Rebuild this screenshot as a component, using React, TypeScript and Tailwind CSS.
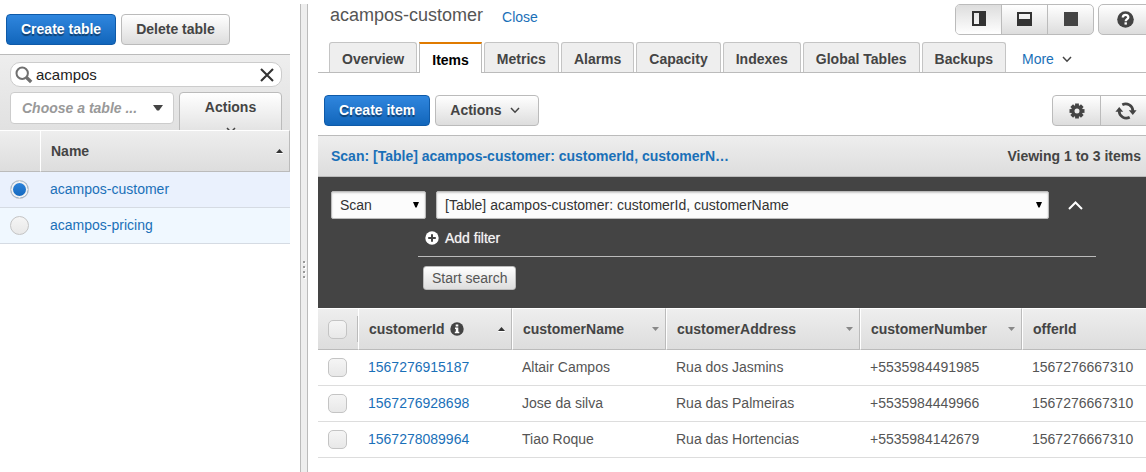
import { useState } from "react";

const panelGradient = "bg-linear-to-b from-[#eeeeee] to-[#dddddd]";
const grayButton =
  "border border-[#bbbbbb] bg-linear-to-b from-white to-[#dddddd] font-bold text-[#444444] hover:to-[#cccccc]";
const blueButton =
  "h-[31px] rounded border border-[#0f5aa8] bg-linear-to-b from-[#2f86de] to-[#1166bb] px-3.5 pb-0.5 font-bold text-white text-shadow-[0_2px_1px_rgb(0_0_0/0.45)]";

function Chevron({ up = false }: { up?: boolean }) {
  return (
    <svg width="10" height="7" viewBox="0 0 10 7" fill="none" stroke="currentColor" strokeWidth="1.5" aria-hidden="true">
      <path d={up ? "M1 6 L5 1.5 L9 6" : "M1 1 L5 5.2 L9 1"} />
    </svg>
  );
}

function SortArrow({ direction }: { direction: "up" | "down" }) {
  return (
    <svg width="7" height="5" viewBox="0 0 7 5" aria-hidden="true" className={direction === "up" ? "text-[#333333]" : "text-[#888888]"}>
      <path d={direction === "up" ? "M0 4 L3.5 0 L7 4Z" : "M0 0 H7 L3.5 4Z"} fill="currentColor" />
      {direction === "up" && <path d="M0 4.5 H7" stroke="#fff" />}
    </svg>
  );
}

function SearchIcon() {
  return (
    <svg width="18" height="18" viewBox="0 0 18 18" fill="none" stroke="#707070" aria-hidden="true">
      <circle cx="7.2" cy="7.2" r="5.7" strokeWidth="2" />
      <path d="M11.5 11.5 L16.2 16" strokeWidth="3.4" />
    </svg>
  );
}

function GearIcon() {
  return (
    <svg width="16" height="16" viewBox="0 0 16 16" aria-hidden="true">
      <g stroke="#444" strokeWidth="3.8">
        <path d="M8 .5 V4" />
        <path d="M8 12 V15.5" />
        <path d="M.5 8 H4" />
        <path d="M12 8 H15.5" />
        <path d="M2.7 2.7 L5 5" />
        <path d="M11 11 L13.3 13.3" />
        <path d="M2.7 13.3 L5 11" />
        <path d="M11 5 L13.3 2.7" />
      </g>
      <circle cx="8" cy="8" r="4.2" fill="none" stroke="#444" strokeWidth="3.4" />
    </svg>
  );
}

function RefreshIcon() {
  return (
    <svg width="22" height="18" viewBox="0 0 22 18" aria-hidden="true">
      <g fill="none" stroke="#444" strokeWidth="2.7">
        <path d="M7.3 2.8 A7.2 7.2 0 0 1 17.9 9" />
        <path d="M14.7 15.2 A7.2 7.2 0 0 1 4.1 9" />
      </g>
      <path d="M13.8 8.3 H21.6 L17.8 13Z M.4 9.7 H8.2 L4.2 5Z" fill="#444" />
    </svg>
  );
}

function HelpIcon() {
  return (
    <svg width="17" height="17" viewBox="0 0 17 17" aria-hidden="true">
      <circle cx="8.5" cy="8.5" r="8.3" fill="#444" />
      <path d="M5.8 6.6 C5.8 3 11.3 3.2 11.3 6.2 C11.3 8.1 8.7 8.1 8.7 10.2" fill="none" stroke="#fff" strokeWidth="2.3" />
      <rect x="7.5" y="11.3" width="2.4" height="2.3" fill="#fff" />
    </svg>
  );
}

function InfoIcon() {
  return (
    <svg width="14" height="14" viewBox="0 0 14 14" aria-hidden="true">
      <circle cx="7" cy="7" r="6.7" fill="#444" />
      <path d="M5.7 2.4 H8.3 V4.6 H5.7Z M5 5.6 H8.3 V9.8 H9.3 V11.3 H4.8 V9.8 H5.8 V7.1 H5Z" fill="#fff" />
    </svg>
  );
}

function PlusIcon() {
  return (
    <svg width="14" height="14" viewBox="0 0 14 14" aria-hidden="true">
      <circle cx="7" cy="7" r="6.7" fill="#fff" />
      <path d="M7 3.2 V10.8 M3.2 7 H10.8" stroke="#444" strokeWidth="2" />
    </svg>
  );
}

function SelectArrow() {
  return (
    <svg width="6" height="6" viewBox="0 0 6 6" className="pointer-events-none absolute top-[11px] right-[7px]" aria-hidden="true">
      <path d="M0 0 H6 L3.6 5.6 H2.4Z" fill="#000" />
    </svg>
  );
}

const tableNames = ["acampos-customer", "acampos-pricing"];

function Sidebar() {
  const [filter, setFilter] = useState("acampos");
  const [selected, setSelected] = useState(tableNames[0]);

  return (
    <aside className="w-[290px] shrink-0">
      <div className="flex h-[54px] gap-[5px] pt-3.5 pl-1.5">
        <button className={blueButton}>Create table</button>
        <button className={`${grayButton} h-[31px] rounded px-3.5 pb-0.5`}>Delete table</button>
      </div>

      <div className="h-[76px] overflow-hidden border-t border-[#bbbbbb] bg-linear-to-b from-[#eeeeee] to-[#e1e1e1] pt-[7px] pr-2 pl-2.5">
        <div className="flex h-[25px] items-center rounded-[10px] border border-[#cccccc] bg-white pr-[7px] pl-1">
          <SearchIcon />
          <input
            aria-label="Filter tables"
            value={filter}
            onChange={(e) => setFilter(e.target.value)}
            className="ml-[3px] min-w-0 flex-1 text-[15px] text-[#222222] outline-none"
          />
          <button aria-label="Clear filter" onClick={() => setFilter("")}>
            <svg width="14" height="14" viewBox="0 0 14 14" stroke="#333" strokeWidth="2.1" aria-hidden="true">
              <path d="M1 1 L13 13 M13 1 L1 13" />
            </svg>
          </button>
        </div>
        <div className="mt-[5px] flex items-start gap-[5px]">
          <button className="flex h-8 flex-1 items-center justify-between rounded border border-[#cccccc] bg-white pr-2.5 pl-[11px] font-bold text-[#999999] italic">
            Choose a table ...
            <svg width="10" height="6" viewBox="0 0 10 6" aria-hidden="true">
              <path d="M0 0 H10 L6 5.6 H4Z" fill="#444" />
            </svg>
          </button>
          <button className={`${grayButton} flex h-12 w-[103px] flex-col items-center gap-3 rounded pt-1.5`}>
            <span className="leading-4">Actions</span>
            <Chevron />
          </button>
        </div>
      </div>

      <table className="w-full table-fixed border-separate border-spacing-0">
        <colgroup>
          <col className="w-10" />
          <col />
        </colgroup>
        <thead>
          <tr className="h-[42px]">
            <th className={`${panelGradient} border-t border-b border-t-white border-b-[#bbbbbb]`} aria-label="Selection" />
            <th className={`${panelGradient} border-t border-r border-b border-l border-t-white border-r-[#bbbbbb] border-b-[#bbbbbb] border-l-white pr-1.5 pl-2.5`}>
              <div className="flex items-center justify-between">
                Name
                <SortArrow direction="up" />
              </div>
            </th>
          </tr>
        </thead>
        <tbody>
          {tableNames.map((name) => (
            <tr key={name} className={`h-9 ${selected === name ? "bg-[#eaf1fd]" : "bg-[#f0f8ff]"}`}>
              <td className="border-b border-[#d5dbe3] pl-2.5">
                <input
                  type="radio"
                  name="table"
                  aria-label={name}
                  checked={selected === name}
                  onChange={() => setSelected(name)}
                  className="block size-[19px] appearance-none rounded-full border border-[#c4c4c4] bg-linear-to-b from-[#f5f5f5] to-[#e8e8e8] checked:from-[#2f86de] checked:to-[#1166bb] checked:shadow-[inset_0_0_0_2px_#f2f2f2]"
                />
              </td>
              <td className="border-b border-[#d5dbe3] pb-0.5 pl-2.5">
                <a href="#table" className="text-[#1a70b8]">{name}</a>
              </td>
            </tr>
          ))}
        </tbody>
      </table>
    </aside>
  );
}

const tabs = ["Overview", "Items", "Metrics", "Alarms", "Capacity", "Indexes", "Global Tables", "Backups"];

function Tabs() {
  return (
    <nav className="flex h-[31px] shrink-0 items-end gap-0.5 border-b border-[#bbbbbb] pl-[11px] whitespace-nowrap">
      {tabs.map((tab) =>
        tab === "Items" ? (
          <button
            key={tab}
            className="-mb-px h-[31px] border-x border-t-2 border-x-[#bbbbbb] border-t-[#e07b00] bg-white px-3 pt-0.5 font-bold text-black"
          >
            {tab}
          </button>
        ) : (
          <button
            key={tab}
            className="h-[30px] rounded-t-[3px] border border-b-0 border-[#c4c4c4] bg-[#eeeeee] px-3 pt-0.5 font-bold text-[#444444]"
          >
            {tab}
          </button>
        ),
      )}
      <button className="ml-3.5 flex h-[30px] items-center gap-2 pt-1 text-[#1a70b8]">
        More
        <span className="text-[#444444]">
          <Chevron />
        </span>
      </button>
    </nav>
  );
}

function Header() {
  return (
    <header className="flex h-[42px] shrink-0 items-start justify-between pl-3">
      <div className="flex items-end gap-[19px] pt-0.5">
        <h1 className="text-lg leading-[26px] text-[#555555]">acampos-customer</h1>
        <a href="#close" className="leading-[22px] text-[#1a70b8]">Close</a>
      </div>
      <div className="-mr-1.5 flex gap-1 pt-1">
        <div className={`${grayButton} flex h-[31px] divide-x divide-[#bbbbbb] overflow-hidden rounded-[5px]`}>
          <button aria-label="Split vertically" className="flex w-[46px] items-center justify-center bg-linear-to-b from-[#dddddd] to-white pb-0.5">
            <svg width="14" height="15" viewBox="0 0 14 15" aria-hidden="true">
              <path d="M0 0 H14 V15 H0Z M2 2 V13 H7 V2Z" fill="#333" fillRule="evenodd" />
            </svg>
          </button>
          <button aria-label="Split horizontally" className="flex w-[46px] items-center justify-center pb-0.5">
            <svg width="15" height="15" viewBox="0 0 15 15" aria-hidden="true">
              <path d="M0 1 H15 V15 H0Z M2 3 V8 H13 V3Z" fill="#333" fillRule="evenodd" />
            </svg>
          </button>
          <button aria-label="Full view" className="flex w-[45px] items-center justify-center pb-0.5">
            <span className="size-3.5 bg-[#444444]" />
          </button>
        </div>
        <button aria-label="Help" className={`${grayButton} flex h-[31px] w-[54px] items-center justify-center rounded-[5px]`}>
          <HelpIcon />
        </button>
      </div>
    </header>
  );
}

function Toolbar() {
  return (
    <div className="flex h-[62px] shrink-0 items-start justify-between pt-[22px] pl-1.5">
      <div className="flex gap-[5px]">
        <button className={blueButton}>Create item</button>
        <button className={`${grayButton} flex h-[31px] w-[104px] items-center gap-2 rounded pb-0.5 pl-3.5`}>
          Actions
          <span className="pt-0.5">
            <Chevron />
          </span>
        </button>
      </div>
      <div className={`${grayButton} -mr-1.5 flex h-[31px] divide-x divide-[#bbbbbb] rounded`}>
        <button aria-label="Settings" className="flex w-12 items-center justify-center">
          <GearIcon />
        </button>
        <button aria-label="Refresh" className="flex w-[50px] items-center justify-center">
          <RefreshIcon />
        </button>
      </div>
    </div>
  );
}

const selectStyle =
  "h-7 w-full appearance-none rounded-[2px] border border-[#bbbbbb] bg-[#fcfcfc] px-2 text-[#333333] shadow-[inset_0_1px_2px_#cccccc]";

function Query() {
  return (
    <section className="shrink-0">
      <div className={`${panelGradient} flex h-[42px] items-center justify-between border-y border-[#bbbbbb] pr-[5px] pl-[13px] font-bold`}>
        <a href="#query" className="text-[#1a70b8]">
          Scan: [Table] acampos-customer: customerId, customerN…
        </a>
        <span>Viewing 1 to 3 items</span>
      </div>
      <div className="h-[131px] bg-[#444444] pt-3.5 pl-[13px]">
        <div className="flex items-center">
          <div className="relative w-[95px]">
            <select aria-label="Operation" className={selectStyle}>
              <option>Scan</option>
              <option>Query</option>
            </select>
            <SelectArrow />
          </div>
          <div className="relative ml-2.5 flex-1">
            <select aria-label="Table or index" className={selectStyle}>
              <option>[Table] acampos-customer: customerId, customerName</option>
            </select>
            <SelectArrow />
          </div>
          <button aria-label="Collapse search" className="flex w-[97px] pl-[19px] text-white">
            <svg width="15" height="9" viewBox="0 0 15 9" fill="none" stroke="currentColor" strokeWidth="2" aria-hidden="true">
              <path d="M1 8 L7.5 1.5 L14 8" />
            </svg>
          </button>
        </div>
        <div className="mr-[50px] ml-[87px] flex h-[38px] items-center border-b border-[#bbbbbb] pl-[7px]">
          <button className="flex items-center gap-1.5 text-[#f5f5f5] text-shadow-[0_0_1px_rgb(255_255_255/0.6)]">
            <PlusIcon />
            Add filter
          </button>
        </div>
        <button className="mt-[9px] ml-[92px] block h-6 rounded-[3px] border border-[#bbbbbb] bg-linear-to-b from-white to-[#dddddd] px-2 leading-5 text-[#555555]">
          Start search
        </button>
      </div>
    </section>
  );
}

const columns: { name: string; sort?: "up" | "down"; info?: boolean }[] = [
  { name: "customerId", sort: "up", info: true },
  { name: "customerName", sort: "down" },
  { name: "customerAddress", sort: "down" },
  { name: "customerNumber", sort: "down" },
  { name: "offerId" },
];

const rows = [
  ["1567276915187", "Altair Campos", "Rua dos Jasmins", "+5535984491985", "1567276667310"],
  ["1567276928698", "Jose da silva", "Rua das Palmeiras", "+5535984449966", "1567276667310"],
  ["1567278089964", "Tiao Roque", "Rua das Hortencias", "+5535984142679", "1567276667310"],
];

const checkboxStyle =
  "block size-[19px] appearance-none rounded-[5px] border border-[#c4c4c4] bg-linear-to-b from-[#f5f5f5] to-[#e8e8e8] checked:from-[#2f86de] checked:to-[#1166bb]";

function ItemsTable() {
  return (
    <table className="w-full table-fixed border-separate border-spacing-0">
      <colgroup>
        <col className="w-10" />
        <col className="w-[154px]" />
        <col className="w-[154px]" />
        <col className="w-[194px]" />
        <col className="w-[162px]" />
        <col />
      </colgroup>
      <thead>
        <tr className="h-[42px]">
          <th className={`${panelGradient} border-t border-b border-t-white border-b-[#bbbbbb] pl-2.5`}>
            <div className="flex h-[26px] items-center border-r border-[#bbbbbb]">
              <input type="checkbox" aria-label="Select all items" className={checkboxStyle} />
            </div>
          </th>
          {columns.map((column) => (
            <th
              key={column.name}
              className={`${panelGradient} border-t border-r border-b border-l border-t-white border-r-[#bbbbbb] border-b-[#bbbbbb] border-l-white pr-1.5 pl-2.5 last:border-r-0`}
            >
              <div className="flex items-center justify-between">
                <span className="flex items-center gap-1.5">
                  {column.name}
                  {column.info && <InfoIcon />}
                </span>
                {column.sort && <SortArrow direction={column.sort} />}
              </div>
            </th>
          ))}
        </tr>
      </thead>
      <tbody>
        {rows.map((row) => (
          <tr key={row[0]} className="h-9">
            <td className="border-b border-[#dddddd] pl-2.5">
              <input type="checkbox" aria-label={`Select ${row[0]}`} className={checkboxStyle} />
            </td>
            {row.map((value, index) => (
              <td key={index} className="border-b border-[#dddddd] pb-0.5 pl-2.5 text-[#555555]">
                {index === 0 ? <a href="#item" className="text-[#1a70b8]">{value}</a> : value}
              </td>
            ))}
          </tr>
        ))}
      </tbody>
    </table>
  );
}

export default function App() {
  return (
    <div className="flex min-h-screen overflow-hidden bg-white font-['Liberation_Sans',Arial,sans-serif] text-sm leading-5 text-[#444444]">
      <Sidebar />
      <div className="mt-1 ml-2.5 flex w-2 shrink-0 items-center justify-center border-x border-[#bbbbbb] bg-[#eeeeee] pt-16">
        <svg width="4" height="18" viewBox="0 0 4 18" aria-hidden="true">
          <path d="M1 0h2v2h-2z M1 5h2v2h-2z M1 10h2v2h-2z M1 15h2v2h-2z" fill="#fff" transform="translate(1 1)" />
          <path d="M1 0h2v2h-2z M1 5h2v2h-2z M1 10h2v2h-2z M1 15h2v2h-2z" fill="#999" />
        </svg>
      </div>
      <main className="ml-2.5 flex min-w-0 flex-1 flex-col">
        <Header />
        <Tabs />
        <Toolbar />
        <Query />
        <ItemsTable />
      </main>
    </div>
  );
}
